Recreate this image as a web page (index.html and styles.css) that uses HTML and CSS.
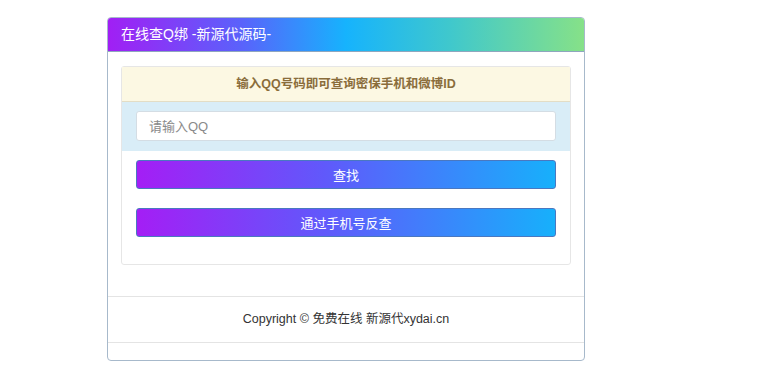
FILE: index.html
```html
<!DOCTYPE html>
<html lang="zh-CN">
<head>
    <meta charset="UTF-8">
    <meta name="viewport" content="width=device-width, initial-scale=1.0">
    <title>在线查Q绑</title>
    <link rel="stylesheet" href="styles.css">
</head>
<body>

    <div class="wrap">
        <div class="panel">
            <div class="panel-heading">在线查Q绑 -新源代源码-</div>

            <div class="panel-body">
                <div class="box">
                    <div class="box-title">输入QQ号码即可查询密保手机和微博ID</div>
                    <div class="box-input">
                        <input type="text" class="qq-input" placeholder="请输入QQ">
                    </div>
                    <div class="box-actions">
                        <button class="btn">查找</button>
                        <button class="btn">通过手机号反查</button>
                    </div>
                </div>
            </div>

            <div class="panel-footer">
                Copyright © 免费在线 新源代xydai.cn
            </div>
        </div>
    </div>

</body>
</html>
```

FILE: styles.css
```css
body {
    margin: 0;
    background-color: #fff;
    font-family: "Liberation Sans", "Noto Sans CJK SC", sans-serif;
    font-size: 13px;
    color: #333;
}

.wrap {
    padding: 17px 0 0 107px;
}

.panel {
    width: 476px;
    border: 1px solid #a7b9cb;
    border-radius: 4px;
    overflow: hidden;
    background-color: #fff;
}

.panel-heading {
    height: 33px;
    line-height: 33px;
    padding: 0 13px;
    color: #fff;
    font-size: 14px;
    background: linear-gradient(to right, #a11ff4 0%, #5a62fb 28%, #16b3fd 50%, #40c8cc 72%, #86e188 100%);
    border-bottom: 1px solid #8fa6be;
}

.panel-body {
    padding: 14px 13px 31px;
}

.box {
    border: 1px solid #e6e6e6;
    border-radius: 3px;
}

.box-title {
    height: 34px;
    line-height: 34px;
    text-align: center;
    background-color: #fcf8e3;
    color: #8a6d3b;
    font-size: 12.5px;
    font-weight: bold;
    border-bottom: 1px solid #e3ddc5;
}

.box-input {
    background-color: #d9edf7;
    padding: 9px 14px 10px;
}

.qq-input {
    display: block;
    width: 100%;
    height: 30px;
    box-sizing: border-box;
    padding: 0 12px;
    border: 1px solid #d4dde4;
    border-radius: 3px;
    font-family: inherit;
    font-size: 13px;
}

.qq-input::placeholder {
    color: #8a8a8a;
}

.box-actions {
    padding: 9px 14px 27px;
    display: flex;
    flex-direction: column;
    gap: 19px;
}

.btn {
    height: 29px;
    border: 1px solid #4a78c0;
    border-radius: 3px;
    color: #fff;
    font-family: inherit;
    font-size: 13px;
    background: linear-gradient(to right, #a41ef5, #6059fb 45%, #17b0fb);
    cursor: pointer;
}

.panel-footer {
    border-top: 1px solid #e4e4e4;
    border-bottom: 1px solid #e4e4e4;
    height: 45px;
    line-height: 45px;
    text-align: center;
    font-size: 12.5px;
    color: #333;
    margin-bottom: 17px;
}
```
